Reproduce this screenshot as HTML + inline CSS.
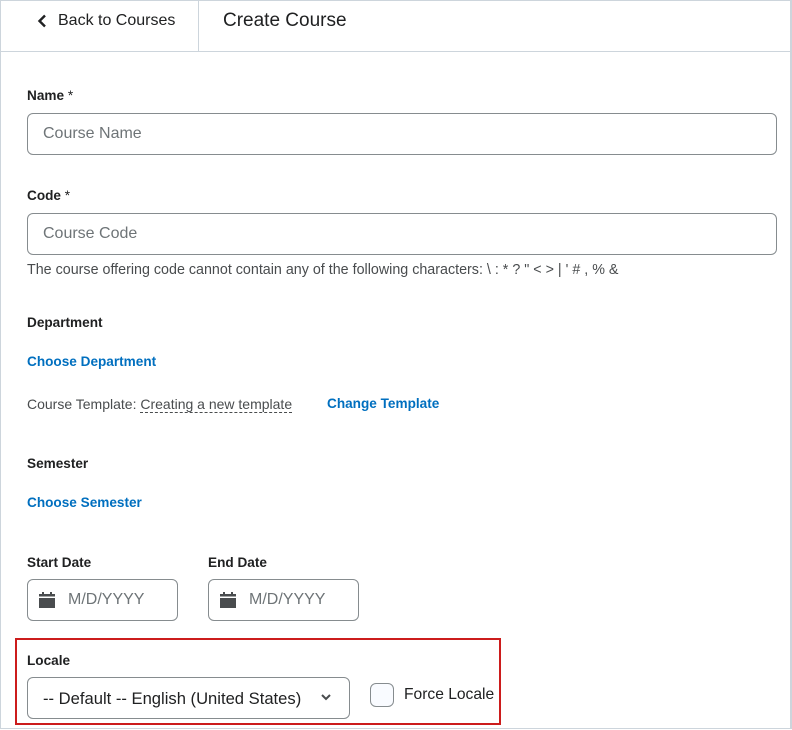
<!DOCTYPE html>
<html><head><style>
*{box-sizing:border-box;margin:0;padding:0}
body{width:792px;height:730px;background:#fff;font-family:"Liberation Sans",sans-serif;color:#202122;position:relative;overflow:hidden}
.a{position:absolute;white-space:nowrap}
.lbl{font-weight:bold;font-size:13.6px;color:#202122}
.inp{position:absolute;border:1px solid #868c8f;border-radius:6px;background:#fff}
.ph{position:absolute;color:#6e7477;font-size:16px}
.link{color:#006fbf;font-weight:bold;font-size:13.6px}
</style></head><body>
<div class="a" style="left:0;top:0;width:792px;height:729px;border:1px solid #cdd5dc;border-right:2px solid #cdd5dc"></div>
<div class="a" style="left:0;top:51px;width:792px;height:1px;background:#cdd5dc"></div>
<div class="a" style="left:198px;top:0;width:1px;height:52px;background:#cdd5dc"></div>
<svg class="a" style="left:37px;top:14px" width="10" height="14" viewBox="0 0 10 14"><path d="M8 1.5 L2.5 7 L8 12.5" stroke="#202122" stroke-width="2.4" fill="none"/></svg>
<div class="a" style="left:58px;top:12px;font-size:16px">Back to Courses</div>
<div class="a" style="left:223px;top:10px;font-size:19px">Create Course</div>

<div class="a lbl" style="left:27px;top:88px">Name <span style="font-weight:normal">*</span></div>
<div class="inp" style="left:27px;top:113px;width:750px;height:42px"></div>
<div class="ph" style="left:43px;top:125px">Course Name</div>

<div class="a lbl" style="left:27px;top:188px">Code <span style="font-weight:normal">*</span></div>
<div class="inp" style="left:27px;top:213px;width:750px;height:42px"></div>
<div class="ph" style="left:43px;top:225px">Course Code</div>
<div class="a" style="left:27px;top:262px;font-size:14.3px;color:#494c4e">The course offering code cannot contain any of the following characters: \ : * ? " &lt; &gt; | ' # , % &amp;</div>

<div class="a lbl" style="left:27px;top:315px">Department</div>
<div class="a link" style="left:27px;top:354px">Choose Department</div>
<div class="a" style="left:27px;top:396px;font-size:14px;color:#494c4e">Course Template: <span style="border-bottom:1px dashed #494c4e">Creating a new template</span></div>
<div class="a link" style="left:327px;top:396px">Change Template</div>

<div class="a lbl" style="left:27px;top:456px">Semester</div>
<div class="a link" style="left:27px;top:495px">Choose Semester</div>

<div class="a lbl" style="left:27px;top:555px">Start Date</div>
<div class="a lbl" style="left:208px;top:555px">End Date</div>
<div class="inp" style="left:27px;top:579px;width:151px;height:42px"></div>
<div class="inp" style="left:208px;top:579px;width:151px;height:42px"></div>
<svg class="a" style="left:39px;top:592px" width="16" height="16" viewBox="0 0 16 16"><rect x="0" y="2" width="16" height="2.5" fill="#494c4e"/><rect x="3" y="0" width="2" height="3" fill="#494c4e"/><rect x="11" y="0" width="2" height="3" fill="#494c4e"/><rect x="0" y="6" width="16" height="10" fill="#494c4e"/></svg>
<svg class="a" style="left:220px;top:592px" width="16" height="16" viewBox="0 0 16 16"><rect x="0" y="2" width="16" height="2.5" fill="#494c4e"/><rect x="3" y="0" width="2" height="3" fill="#494c4e"/><rect x="11" y="0" width="2" height="3" fill="#494c4e"/><rect x="0" y="6" width="16" height="10" fill="#494c4e"/></svg>
<div class="ph" style="left:68px;top:591px">M/D/YYYY</div>
<div class="ph" style="left:249px;top:591px">M/D/YYYY</div>

<div class="a" style="left:15px;top:638px;width:486px;height:87px;border:2px solid #cc1c1c"></div>
<div class="a lbl" style="left:27px;top:653px">Locale</div>
<div class="inp" style="left:27px;top:677px;width:323px;height:42px"></div>
<div class="a" style="left:43px;top:689px;font-size:16.6px;color:#202122">-- Default -- English (United States)</div>
<svg class="a" style="left:320px;top:693px" width="12" height="8" viewBox="0 0 12 8"><path d="M2 2 L6 6 L10 2" stroke="#494c4e" stroke-width="2" fill="none"/></svg>
<div class="a" style="left:370px;top:683px;width:24px;height:24px;border:1px solid #868c8f;border-radius:6px;background:#f9fbff"></div>
<div class="a" style="left:404px;top:686px;font-size:15.6px">Force Locale</div>
</body></html>
